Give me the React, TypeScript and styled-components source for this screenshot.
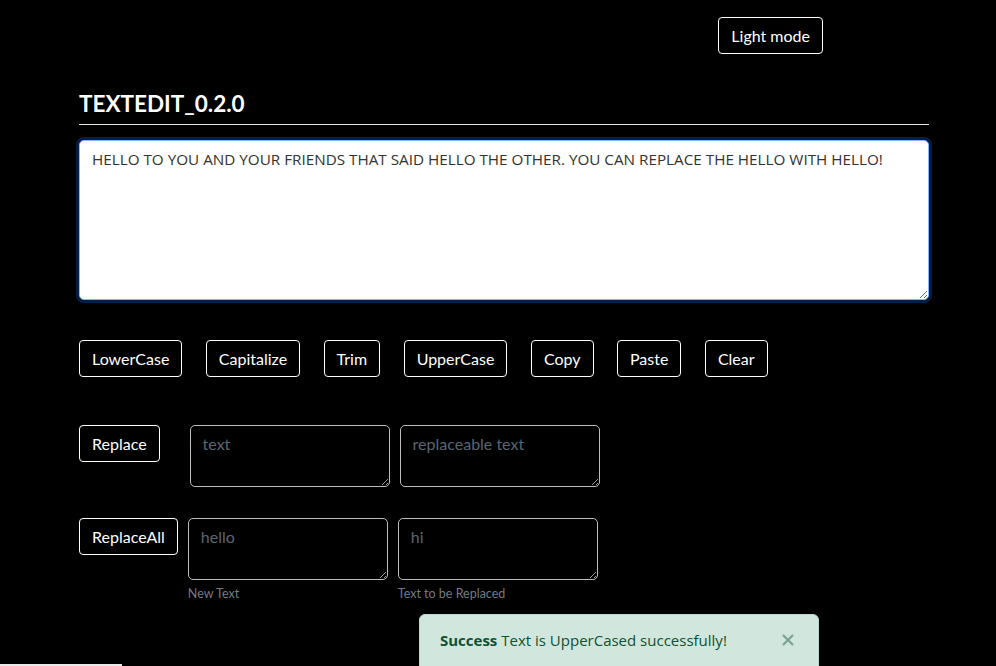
import React from "react";
import styled, { createGlobalStyle } from "styled-components";

const Global = createGlobalStyle`
  html, body { margin: 0; padding: 0; background: #000; }
  body {
    font-family: "Lato", "Open Sans", "Liberation Sans", sans-serif;
    color: #fff;
    font-size: 16px;
    overflow: hidden;
  }
  * { box-sizing: border-box; }
`;

const Page = styled.div`
  min-height: 666px;
  background: #000;
`;

const Header = styled.header`
  display: flex;
  justify-content: flex-end;
  padding: 17px 173px 0 0;
`;

const Button = styled.button`
  font-family: inherit;
  font-size: 16px;
  line-height: 23px;
  padding: 6px 12px;
  color: #fff;
  background: #000;
  border: 1px solid #fff;
  border-radius: 4px;
  cursor: pointer;
  white-space: nowrap;
  flex: none;
`;

const Main = styled.main`
  margin: 0 67px 0 79px;
`;

const Title = styled.h1`
  font-size: 22.5px;
  font-weight: 700;
  line-height: 29px;
  margin: 35px 0 6px;
  letter-spacing: 0;
`;

const Rule = styled.hr`
  border: 0;
  border-top: 1px solid #e6e6e6;
  margin: 0 0 15px;
`;

const MainText = styled.textarea`
  display: block;
  width: 100%;
  height: 160px;
  padding: 6px 12px;
  font-family: "Open Sans", "Lato", sans-serif;
  font-size: 15.25px;
  line-height: 24px;
  color: #333;
  background: #fff;
  border: 1px solid #86b7fe;
  border-radius: 5px;
  box-shadow: 0 0 0 3px rgba(13, 110, 253, 0.28);
  outline: none;
  resize: vertical;
`;

const ButtonRow = styled.div`
  display: flex;
  gap: 23.5px;
  margin-top: 40px;
`;

const ReplaceRow = styled.div<{ $top: number; $lead: number }>`
  display: flex;
  align-items: flex-start;
  margin-top: ${(p) => p.$top}px;
  & > *:nth-child(2) { margin-left: ${(p) => p.$lead}px; }
  & > *:nth-child(3) { margin-left: 10px; }
`;

const Field = styled.div`
  display: flex;
  flex-direction: column;
`;

const SmallArea = styled.textarea`
  width: 200px;
  height: 62px;
  padding: 6px 12px;
  font-family: inherit;
  font-size: 16px;
  line-height: 24px;
  color: #fff;
  background: #000;
  border: 1px solid #bdbdbd;
  border-radius: 5px;
  outline: none;
  resize: vertical;
  &::placeholder { color: #5b6670; }
`;

const Hint = styled.span`
  margin-top: 6px;
  font-size: 12.5px;
  line-height: 16px;
  color: #737b83;
`;

const Toast = styled.div`
  position: fixed;
  left: 419px;
  top: 614px;
  width: 400px;
  height: 64px;
  padding: 13px 20px;
  background: #d1e7dd;
  border: 1px solid #badbcc;
  border-radius: 6px;
  color: #0f5132;
  font-family: "Open Sans", "Lato", sans-serif;
  font-size: 15px;
  line-height: 24px;
  display: flex;
  align-items: flex-start;
  justify-content: space-between;
`;

const Close = styled.button`
  border: 0;
  background: transparent;
  padding: 0;
  margin: 6px 4px 0 0;
  opacity: 0.45;
  cursor: pointer;
  display: flex;
`;

const BottomBar = styled.div`
  position: fixed;
  left: 0;
  bottom: 0;
  width: 122px;
  height: 2px;
  background: #e9e9e9;
`;

export default function App() {
  const text =
    "HELLO TO YOU AND YOUR FRIENDS THAT SAID HELLO THE OTHER. YOU CAN REPLACE THE HELLO WITH HELLO!";
  return (
    <Page>
      <Global />
      <Header>
        <Button>Light mode</Button>
      </Header>
      <Main>
        <Title>TEXTEDIT_0.2.0</Title>
        <Rule />
        <MainText defaultValue={text} />
        <ButtonRow>
          <Button>LowerCase</Button>
          <Button>Capitalize</Button>
          <Button>Trim</Button>
          <Button>UpperCase</Button>
          <Button>Copy</Button>
          <Button>Paste</Button>
          <Button>Clear</Button>
        </ButtonRow>
        <ReplaceRow $top={48} $lead={30}>
          <Button>Replace</Button>
          <SmallArea placeholder="text" />
          <SmallArea placeholder="replaceable text" />
        </ReplaceRow>
        <ReplaceRow $top={31} $lead={10}>
          <Button>ReplaceAll</Button>
          <Field>
            <SmallArea placeholder="hello" />
            <Hint>New Text</Hint>
          </Field>
          <Field>
            <SmallArea placeholder="hi" />
            <Hint>Text to be Replaced</Hint>
          </Field>
        </ReplaceRow>
      </Main>
      <Toast role="alert">
        <span>
          <strong>Success</strong> Text is UpperCased successfully!
        </span>
        <Close aria-label="Close">
          <svg width="12" height="12" viewBox="0 0 12 12">
            <path d="M1 1L11 11M11 1L1 11" stroke="#0f5132" strokeWidth="2.2" />
          </svg>
        </Close>
      </Toast>
      <BottomBar />
    </Page>
  );
}
